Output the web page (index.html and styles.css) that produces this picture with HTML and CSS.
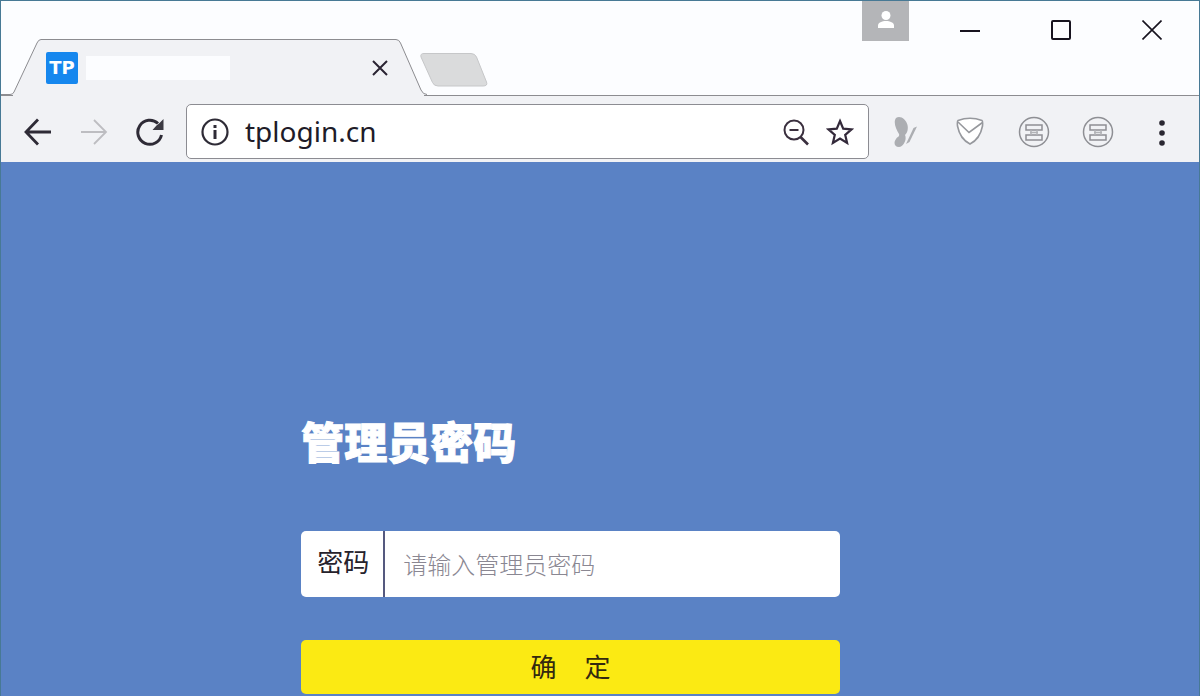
FILE: index.html
```html
<!DOCTYPE html>
<html lang="zh-CN">
<head>
  <meta charset="UTF-8" />
  <title>TP</title>
  <link rel="stylesheet" href="styles.css">
</head>
<body>
  <div class="window">

    <!-- Title bar -->
    <header class="titlebar">
      <div class="tab">
        <svg class="tab-shape" width="426" height="57" viewBox="0 0 426 57" fill="#f1f2f5" stroke="#8c8c90">
          <path d="M0 56 V55.500 H9 Q12 55.500 13 53 L36 4 Q37.500 .5 40 .5 H395 Q398 .5 399.500 4 L420 51 Q422 55.500 426 55.500 V56" />
          <path d="M12 56.500H423" stroke="#f1f2f5" stroke-width="2" />
        </svg>
        <div class="tab-content">
          <span class="favicon">TP</span>
          <span class="tab-title"></span>
          <button class="tab-close" aria-label="关闭标签页">
            <svg width="16" height="16" viewBox="0 0 16 16" fill="none" stroke="#2b2433" stroke-width="2"><path d="M1 1 15 15M15 1 1 15" /></svg>
          </button>
        </div>
      </div>
      <button class="new-tab" aria-label="新标签页">
        <svg width="68" height="34" viewBox="0 0 68 34" fill="#dadbdc" stroke="#c6c7c9"><path d="M4 .5H51Q55 .5 56.500 4L66.500 29Q68 33 63 33H18Q14 33 12.500 29.500L1 4Q0 .5 4 .5Z" /></svg>
      </button>
      <div class="window-controls">
        <button class="profile" aria-label="用户">
          <svg width="18" height="18" viewBox="0 0 18 18" fill="#fff"><circle cx="9" cy="4.500" r="4.500" /><path d="M1 17V14.500C1 8.500 17 8.500 17 14.500V17Z" /></svg>
        </button>
        <button aria-label="最小化">
          <svg width="20" height="20" viewBox="0 0 20 20" fill="none" stroke="#17131f" stroke-width="2"><path d="M0 11H20" /></svg>
        </button>
        <button aria-label="最大化">
          <svg width="20" height="20" viewBox="0 0 20 20" fill="none" stroke="#17131f" stroke-width="2"><rect x="1" y="1" width="18" height="18" rx="1" /></svg>
        </button>
        <button aria-label="关闭">
          <svg width="20" height="20" viewBox="0 0 20 20" fill="none" stroke="#17131f" stroke-width="1.600"><path d="M.5.5 19.500 19.500M19.500.5.5 19.500" /></svg>
        </button>
      </div>
    </header>

    <!-- Toolbar -->
    <nav class="toolbar">
      <button class="tool" aria-label="后退">
        <svg width="28" height="28" viewBox="0 0 28 28" fill="none" stroke="#2e2b36" stroke-width="2.800"><path d="M27 14H2M14 1.500 2 14 14 26.500" /></svg>
      </button>
      <button class="tool" aria-label="前进">
        <svg width="28" height="28" viewBox="0 0 28 28" fill="none" stroke="#bdbdc1" stroke-width="1.800"><path d="M1 14H26M14 2 26 14 14 26" /></svg>
      </button>
      <button class="tool" aria-label="刷新">
        <svg width="28" height="28" viewBox="0 0 28 28"><path d="M22 5.500A12 12 0 1 0 25.500 17" fill="none" stroke="#2e2b36" stroke-width="3" /><path d="M27.500 1V12H16.500L20.500 7.500 23 5.500Z" fill="#3c3a43" /></svg>
      </button>
      <div class="address-bar">
        <svg width="28" height="28" viewBox="0 0 28 28" fill="none" stroke="#2e2b36" stroke-width="2.200"><circle cx="14" cy="14" r="12.500" /><path d="M14 12V21M14 7V10" stroke-width="3" /></svg>
        <input class="url" type="text" aria-label="地址" value="tplogin.cn" />
        <button aria-label="缩小">
          <svg width="28" height="28" viewBox="0 0 28 28" fill="none" stroke="#3a2f3e" stroke-width="2"><circle cx="12" cy="12" r="9.500" /><path d="M7.500 12H16.500" /><path d="M18.500 19 26 26.500" stroke-width="2.600" /></svg>
        </button>
        <button aria-label="收藏">
          <svg width="28" height="28" viewBox="0 0 28 28" fill="none" stroke="#33293a" stroke-width="2.200"><path d="M14 3 17.200 10.700 25.500 11.400 19.200 16.800 21.100 25 14 20.600 6.900 25 8.800 16.800 2.500 11.400 10.800 10.700Z" /></svg>
        </button>
      </div>
      <div class="extensions">
        <button aria-label="扩展">
          <svg width="32" height="32" viewBox="0 0 32 32" fill="#acaeb2"><path d="M6 2C10-1 16 3 17.500 9C18.500 14 17 17 15 19C17 23 14 30 9 31C4 31 3.500 26 6 23C7 21 10 21 9 18C6 13 3 6 6 2Z" /><path d="M16 28 23.500 12 27 10.500 19.500 26Z" /></svg>
        </button>
        <button aria-label="邮件">
          <svg width="32" height="32" viewBox="0 0 32 32" fill="#fff" stroke="#96989d" stroke-width="1.600"><path d="M4 4.500Q16 0 28 4.500Q29 5 28.500 10Q26 23 16 28Q6 23 3.500 10Q3 5 4 4.500Z" /><path d="M4 6 15 16.500 28.500 6.500" fill="none" /></svg>
        </button>
        <button aria-label="扩展">
          <svg width="32" height="32" viewBox="0 0 32 32" fill="none" stroke="#8e8f94" stroke-width="1.500"><circle cx="16" cy="16" r="14.500" /><path d="M8 9H24V14H8ZM8 19H24V24H8Z" /><path d="M12 16.500H20M13 14V19M19 14V19" stroke="#b2b3b7" /></svg>
        </button>
        <button aria-label="扩展">
          <svg width="32" height="32" viewBox="0 0 32 32" fill="none" stroke="#8e8f94" stroke-width="1.500"><circle cx="16" cy="16" r="14.500" /><path d="M8 9H24V14H8ZM8 19H24V24H8Z" /><path d="M12 16.500H20M13 14V19M19 14V19" stroke="#b2b3b7" /></svg>
        </button>
        <button aria-label="菜单">
          <svg width="32" height="32" viewBox="0 0 32 32" fill="#2a2732"><circle cx="16" cy="7" r="2.800" /><circle cx="16" cy="17" r="2.800" /><circle cx="16" cy="27" r="2.800" /></svg>
        </button>
      </div>
    </nav>

    <!-- Login page -->
    <main class="page">
      <form class="login-form">
        <h1>管理员密码</h1>
        <div class="password-field">
          <label for="password">密码</label>
          <input type="password" id="password" placeholder="请输入管理员密码" />
        </div>
        <button class="submit" type="button"><span>确</span><span>定</span></button>
      </form>
    </main>

  </div>
</body>
</html>
```

FILE: styles.css
```css
* {
  box-sizing: border-box;
}

body {
  margin: 0;
  font-family: "Noto Sans", "Noto Sans CJK SC", sans-serif;
}

button {
  padding: 0;
  border: none;
  background: none;
  font-family: inherit;
  cursor: pointer;
}

input {
  min-width: 0;
  padding: 0;
  border: none;
  outline: none;
  background: none;
  font-family: inherit;
}

svg {
  display: block;
}

.window {
  display: flex;
  flex-direction: column;
  min-height: 100vh;
  border: 1px solid #477995;
  border-bottom: none;
}

/* Title bar */
.titlebar {
  display: flex;
  height: 95px;
  background: linear-gradient(#8c8c90, #8c8c90) bottom / 100% 1px no-repeat #fcfdff;
}

.tab {
  display: grid;
  align-self: flex-end;
}

.tab-shape,
.tab-content {
  grid-area: 1 / 1;
}

.tab-content {
  display: flex;
  align-items: center;
  padding: 0 38px 0 45px;
}

.favicon {
  width: 32px;
  border-radius: 2px;
  background-color: #1687ee;
  color: #fff;
  font: bold 18px/32px "DejaVu Sans", sans-serif;
  text-align: center;
}

.tab-title {
  width: 144px;
  height: 24px;
  margin-left: 8px;
  background-color: #fcfdff;
}

.tab-close {
  margin-left: auto;
  padding-right: 1px;
}

.new-tab {
  align-self: flex-end;
  margin: 0 0 9px -7px;
}

.window-controls {
  display: flex;
  align-items: flex-start;
  margin-left: auto;
  padding-right: 2px;
}

.window-controls button {
  display: flex;
  justify-content: center;
  width: 91px;
  padding-top: 19px;
}

.window-controls .profile {
  width: 47px;
  height: 40px;
  margin-right: 15px;
  padding-top: 10px;
  background-color: #b4b5b8;
}

/* Toolbar */
.toolbar {
  display: flex;
  align-items: center;
  gap: 28px;
  height: 66px;
  padding: 5px 21px 0 23px;
  background-color: #f1f2f5;
}

.address-bar {
  display: flex;
  flex: 1;
  align-items: center;
  gap: 16px;
  height: 55px;
  margin-left: -6px;
  padding: 0 14px;
  border: 1px solid #8c8c92;
  border-radius: 5px;
  background-color: #fff;
}

.url {
  flex: 1;
  padding-bottom: 2px;
  color: #201b28;
  font-size: 28px;
}

.extensions {
  display: flex;
  gap: 32px;
  margin-left: -7px;
}

/* Login page */
.page {
  flex: 1;
  padding-left: 1px;
  background-color: #5a82c5;
}

.login-form {
  width: 45%;
  margin-left: 25%;
  padding: 249px 0 2px;
}

h1 {
  margin: 0 0 56px;
  color: #fff;
  font-size: 43px;
  font-weight: 900;
  line-height: 64px;
  -webkit-text-stroke: 1px #fff;
}

.password-field {
  display: flex;
  height: 66px;
  margin-bottom: 43px;
  border-radius: 5px;
  background-color: #fff;
}

.password-field label {
  width: 84px;
  padding-left: 2px;
  border-right: 2px solid #55597f;
  color: #26222c;
  font-size: 26px;
  line-height: 62px;
  text-align: center;
}

.password-field input {
  flex: 1;
  padding: 0 18px;
  font-size: 24px;
}

.password-field input::placeholder {
  color: #8a8792;
  font-weight: 300;
}

.submit {
  display: flex;
  justify-content: center;
  gap: 28px;
  width: 100%;
  border-radius: 5px;
  background-color: #fbea13;
  color: #33290f;
  font-size: 26px;
  line-height: 54px;
}
```
